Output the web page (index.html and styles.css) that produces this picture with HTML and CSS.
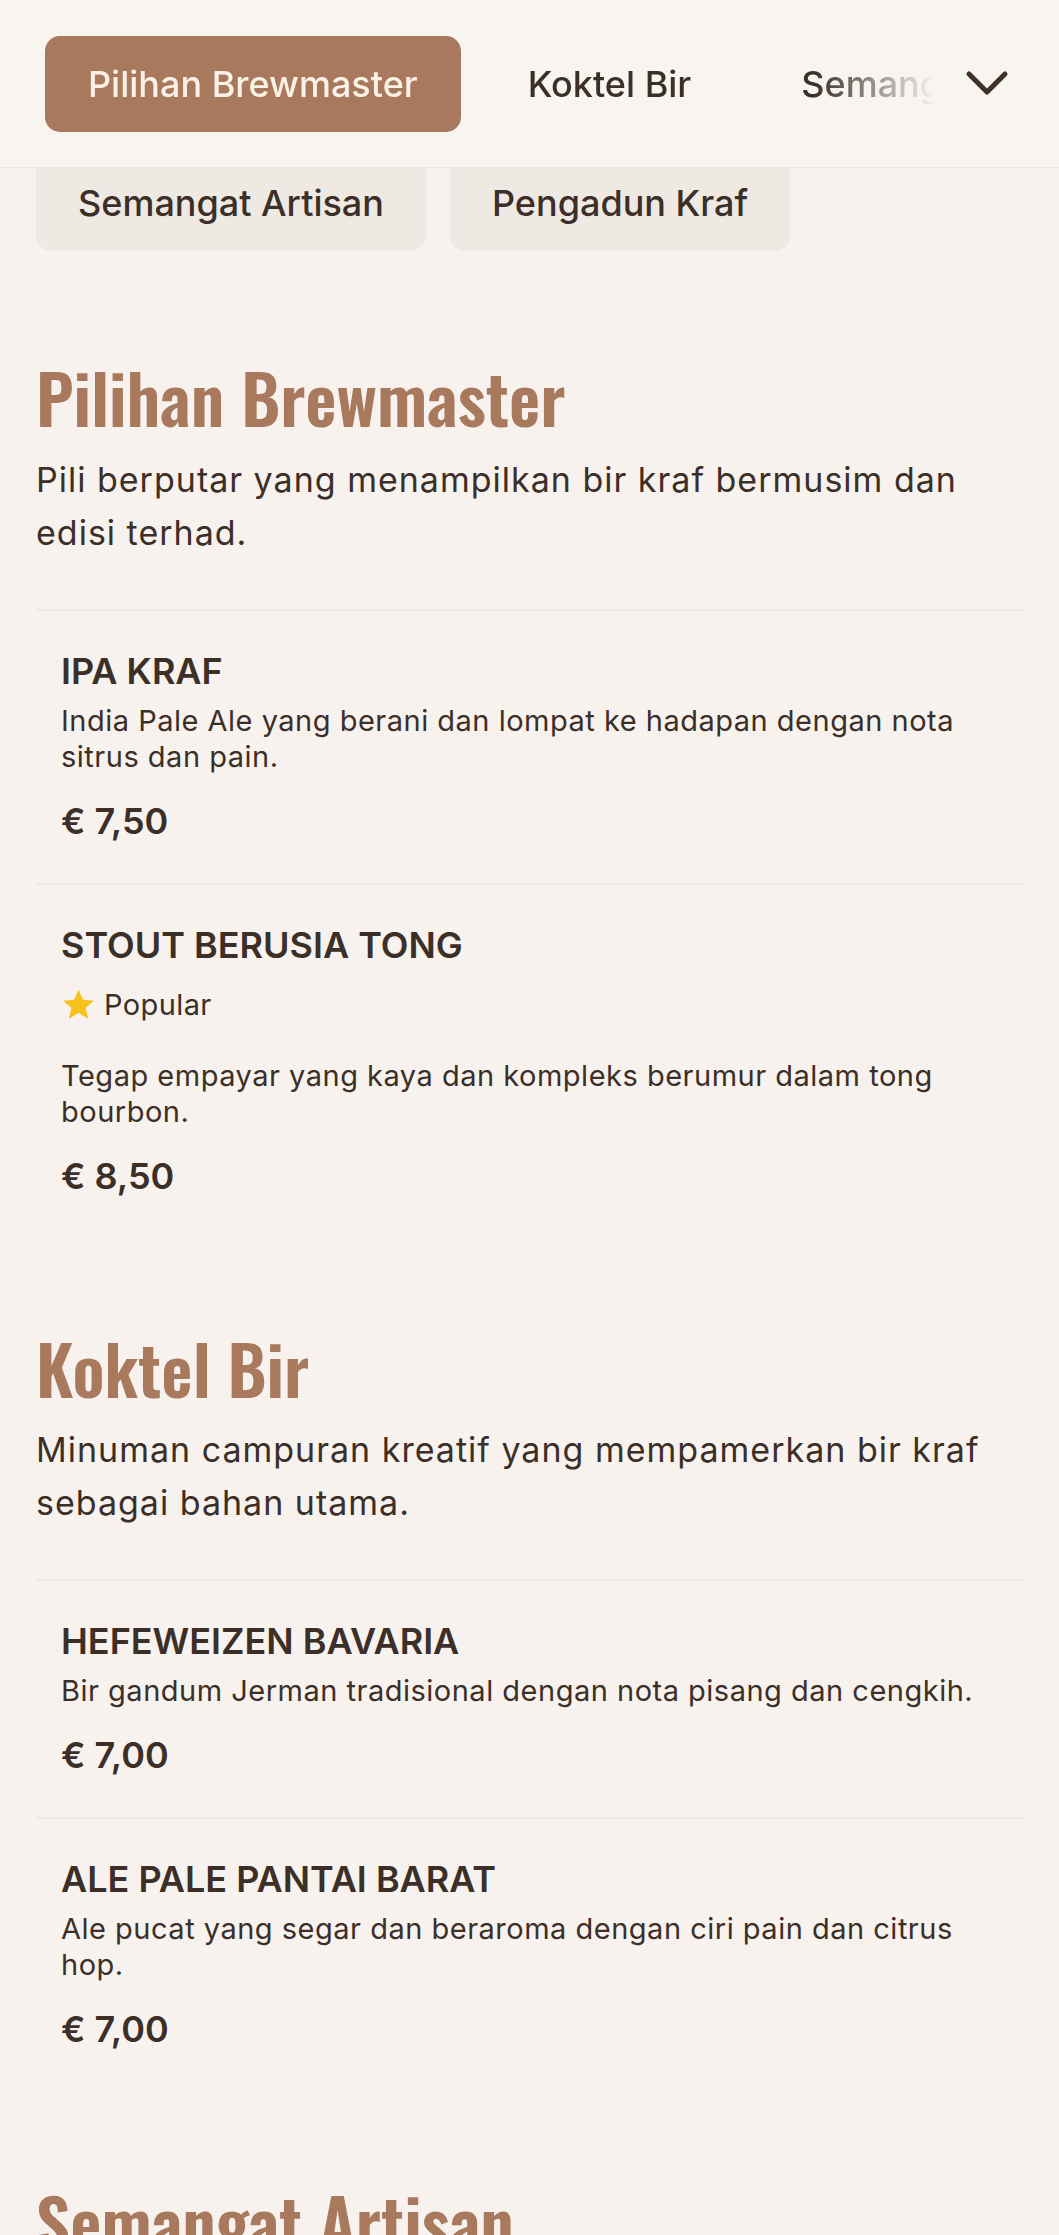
FILE: index.html
```html
<!DOCTYPE html>
<html lang="ms">
<head>
    <meta charset="UTF-8">
    <meta name="viewport" content="width=device-width, initial-scale=1.0">
    <title>Menu Bir Kraf</title>
    <link rel="stylesheet" href="styles.css">
</head>
<body>

    <header class="topbar">
        <nav class="tabs">
            <a class="tab active" href="#brewmaster">Pilihan Brewmaster</a>
            <a class="tab" href="#koktel">Koktel Bir</a>
            <a class="tab" href="#artisan">Semangat Artisan</a>
            <a class="tab" href="#pengadun">Pengadun Kraf</a>
        </nav>
        <button class="more" aria-label="Semua kategori">
            <svg width="44" height="28" viewBox="0 0 44 28">
                <polyline points="4,4 22,22 40,4" fill="none" stroke="#3d312a" stroke-width="5" stroke-linecap="round" stroke-linejoin="round"/>
            </svg>
        </button>
    </header>

    <main class="menu">
        <div class="pills">
            <span class="pill">Semangat Artisan</span>
            <span class="pill">Pengadun Kraf</span>
        </div>

        <section class="menu-section" id="brewmaster">
            <h2>Pilihan Brewmaster</h2>
            <p class="section-desc">Pili berputar yang menampilkan bir kraf bermusim dan edisi terhad.</p>

            <div class="item">
                <h3 class="item-name">IPA KRAF</h3>
                <p class="item-desc">India Pale Ale yang berani dan lompat ke hadapan dengan nota sitrus dan pain.</p>
                <div class="item-price">€ 7,50</div>
            </div>

            <div class="item">
                <h3 class="item-name">STOUT BERUSIA TONG</h3>
                <div class="badges">
                    <svg class="star" width="35" height="35" viewBox="0 0 24 24">
                        <path d="M12 1.8l3.1 6.9 7.4.7-5.6 5 1.7 7.4L12 17.9l-6.6 3.9 1.7-7.4-5.6-5 7.4-.7z" fill="#f5c11d"/>
                    </svg>
                    <span>Popular</span>
                </div>
                <p class="item-desc">Tegap empayar yang kaya dan kompleks berumur dalam tong bourbon.</p>
                <div class="item-price">€ 8,50</div>
            </div>
        </section>

        <section class="menu-section" id="koktel">
            <h2>Koktel Bir</h2>
            <p class="section-desc">Minuman campuran kreatif yang mempamerkan bir kraf sebagai bahan utama.</p>

            <div class="item">
                <h3 class="item-name">HEFEWEIZEN BAVARIA</h3>
                <p class="item-desc">Bir gandum Jerman tradisional dengan nota pisang dan cengkih.</p>
                <div class="item-price">€ 7,00</div>
            </div>

            <div class="item">
                <h3 class="item-name">ALE PALE PANTAI BARAT</h3>
                <p class="item-desc">Ale pucat yang segar dan beraroma dengan ciri pain dan citrus hop.</p>
                <div class="item-price">€ 7,00</div>
            </div>
        </section>

        <section class="menu-section" id="artisan">
            <h2>Semangat Artisan</h2>
            <p class="section-desc">Spirit kecil-kecilan yang disuling dengan teliti oleh pembuat tempatan.</p>
        </section>
    </main>

</body>
</html>
```

FILE: styles.css
```css
body {
    margin: 0;
    background-color: #f7f2ee;
    color: #3b2f28;
    font-family: Inter, "Noto Sans", sans-serif;
}

/* bar atas yang kekal di atas kandungan */
.topbar {
    position: fixed;
    top: 0;
    left: 0;
    right: 0;
    z-index: 10;
    height: 168px;
    box-sizing: border-box;
    padding: 0 20px 0 45px;
    display: flex;
    align-items: center;
    background-color: #f8f4f0;
    border-bottom: 1px solid #efe8e2;
}

.tabs {
    display: flex;
    gap: 24px;
    width: 890px;
    overflow: hidden;
    -webkit-mask-image: linear-gradient(to right, #000 calc(100% - 120px), transparent 100%);
    mask-image: linear-gradient(to right, #000 calc(100% - 120px), transparent 100%);
}

.tab {
    flex-shrink: 0;
    display: flex;
    align-items: center;
    height: 96px;
    padding: 0 43px;
    border-radius: 15px;
    font-size: 36px;
    font-weight: 500;
    color: #3b2f28;
    text-decoration: none;
    white-space: nowrap;
}

.tab.active {
    background-color: #a8795c;
    color: #fcf1e7;
}

.more {
    width: 104px;
    height: 96px;
    display: flex;
    align-items: center;
    justify-content: center;
    border: none;
    background: none;
    padding: 0;
}

.menu {
    padding: 155px 36px 0;
}

.pills {
    display: flex;
    gap: 24px;
    margin-bottom: 16px;
}

.pill {
    display: flex;
    align-items: center;
    height: 96px;
    padding: 0 42px;
    border-radius: 15px;
    background-color: #efe9e4;
    font-size: 36px;
    font-weight: 500;
    white-space: nowrap;
}

.menu-section {
    padding-top: 89px;
}

.menu-section h2 {
    margin: 0;
    font-family: Oswald, "Liberation Sans Narrow", "DejaVu Sans Condensed", sans-serif;
    font-size: 68px;
    line-height: 1.2;
    font-weight: 600;
    color: #a8795c;
}

.section-desc {
    margin: 15px 0 50px;
    font-size: 34px;
    line-height: 53px;
    letter-spacing: 1px;
}

.item {
    padding: 37px 25px 38px;
    border-top: 2px solid #efe9e3;
}

.item-name {
    margin: 0 0 8px;
    font-size: 36px;
    line-height: 47px;
    font-weight: 600;
}

.item-desc {
    margin: 0;
    font-size: 29px;
    line-height: 36px;
    letter-spacing: 0.5px;
}

.item-price {
    margin-top: 23px;
    font-size: 36px;
    line-height: 47px;
    font-weight: 600;
}

.badges {
    display: flex;
    align-items: center;
    gap: 8px;
    height: 36px;
    margin: 18px 0 35px;
    font-size: 29px;
    letter-spacing: 0.4px;
}
```
